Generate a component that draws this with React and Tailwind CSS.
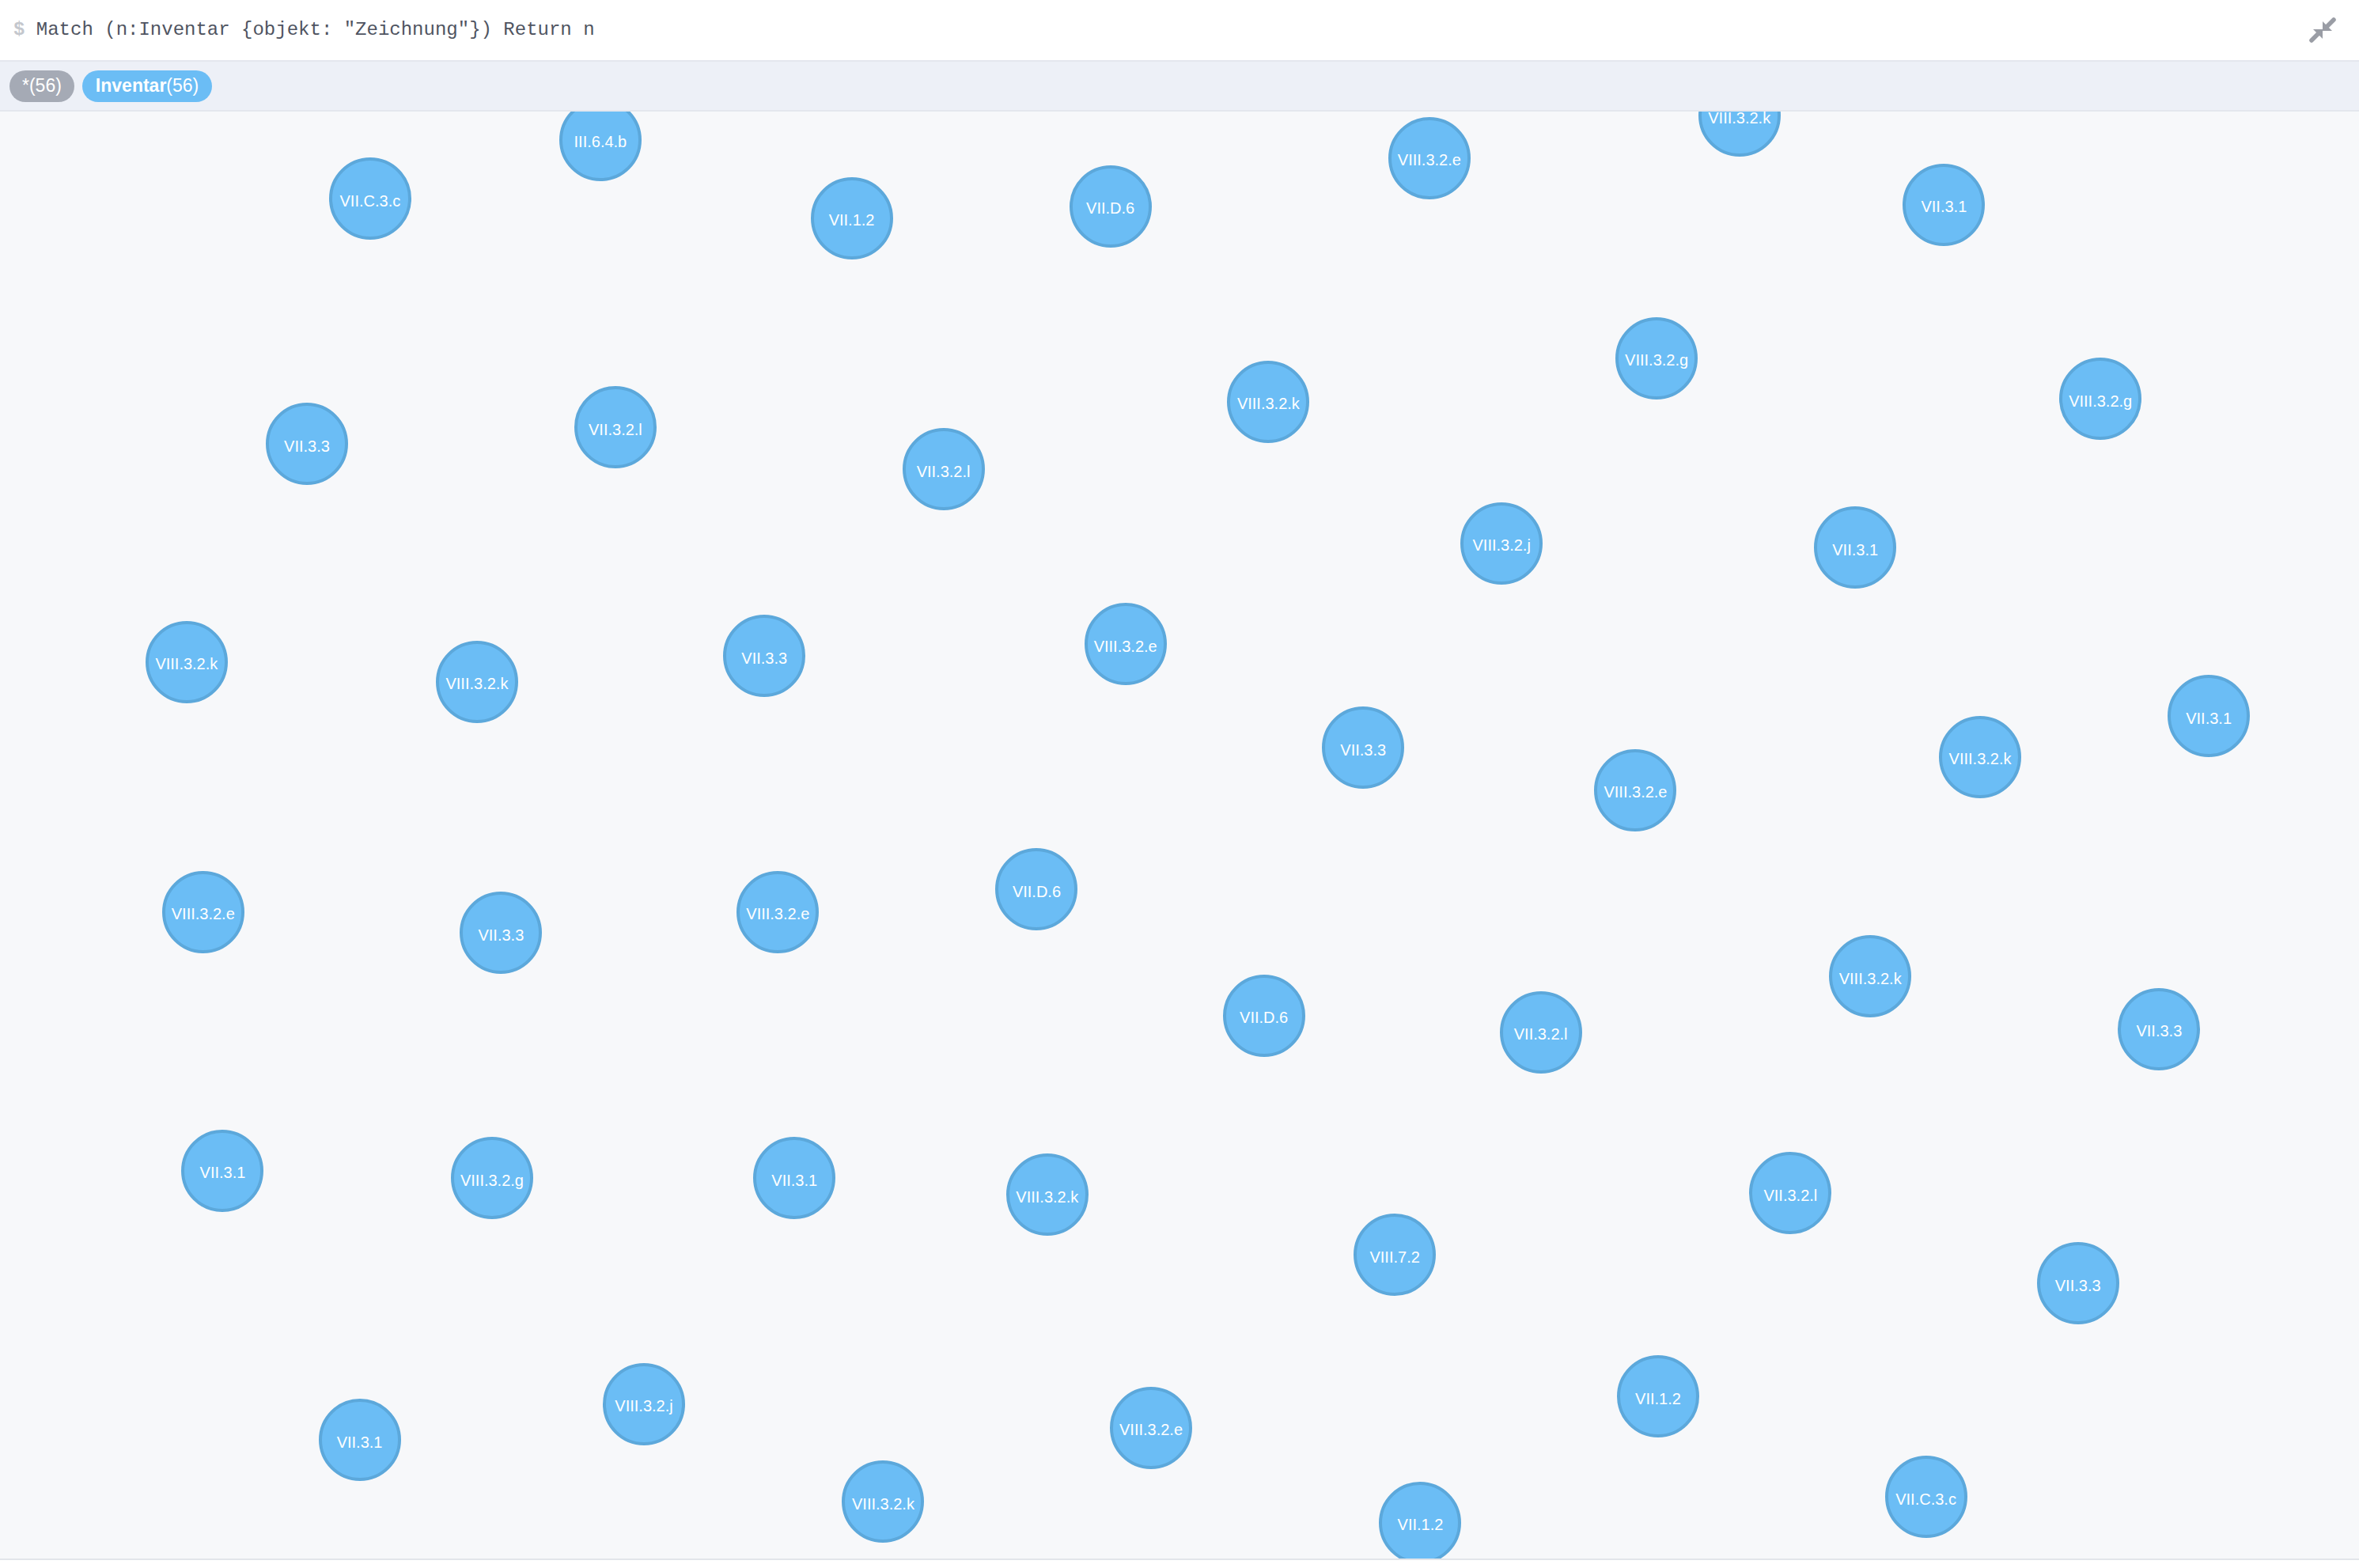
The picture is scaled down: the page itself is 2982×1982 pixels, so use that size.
import React from 'react';

// node centres measured on the half-size capture, scaled up at render
const nodes = [
    ['III.6.4.b', 399, 93],
    ['VII.C.3.c', 246, 132],
    ['VII.1.2', 566, 145],
    ['VII.D.6', 738, 137],
    ['VIII.3.2.e', 950, 105],
    ['VIII.3.2.k', 1156, 77],
    ['VII.3.1', 1292, 136],
    ['VIII.3.2.g', 1101, 238],
    ['VIII.3.2.g', 1396, 265],
    ['VIII.3.2.k', 843, 267],
    ['VII.3.3', 204, 295],
    ['VII.3.2.l', 409, 284],
    ['VII.3.2.l', 627, 312],
    ['VIII.3.2.j', 998, 361],
    ['VII.3.1', 1233, 364],
    ['VIII.3.2.k', 124, 440],
    ['VIII.3.2.k', 317, 453],
    ['VII.3.3', 508, 436],
    ['VIII.3.2.e', 748, 428],
    ['VII.3.3', 906, 497],
    ['VIII.3.2.e', 1087, 525],
    ['VIII.3.2.k', 1316, 503],
    ['VII.3.1', 1468, 476],
    ['VIII.3.2.e', 135, 606],
    ['VII.3.3', 333, 620],
    ['VIII.3.2.e', 517, 606],
    ['VII.D.6', 689, 591],
    ['VII.D.6', 840, 675],
    ['VII.3.2.l', 1024, 686],
    ['VIII.3.2.k', 1243, 649],
    ['VII.3.3', 1435, 684],
    ['VII.3.1', 148, 778],
    ['VIII.3.2.g', 327, 783],
    ['VII.3.1', 528, 783],
    ['VIII.3.2.k', 696, 794],
    ['VIII.7.2', 927, 834],
    ['VII.3.2.l', 1190, 793],
    ['VII.3.3', 1381, 853],
    ['VII.3.1', 239, 957],
    ['VIII.3.2.j', 428, 933],
    ['VIII.3.2.e', 765, 949],
    ['VIII.3.2.k', 587, 998],
    ['VII.1.2', 944, 1012],
    ['VII.1.2', 1102, 928],
    ['VII.C.3.c', 1280, 995],
];

const SCALE = 1.902;
const CANVAS_TOP = 141;
const R = 52;

const CollapseIcon = () => (
    <svg width="34" height="34" viewBox="0 0 34 34" fill="#9a9da5">
        <path d="M31 4 L22 13" stroke="#9a9da5" strokeWidth="5.5" strokeLinecap="round" />
        <polygon points="17,6 17,18 29,18" />
        <path d="M3 30 L12 21" stroke="#9a9da5" strokeWidth="5.5" strokeLinecap="round" />
        <polygon points="17,16 5,16 17,28" />
    </svg>
);

const App = () => {
    return (
        <div className="flex h-[1982px] w-full flex-col bg-white font-['Liberation_Sans',Arial,sans-serif]">
            <div className="flex h-[76px] shrink-0 items-center justify-between bg-white pl-[17px] pr-[29px]">
                <p className="whitespace-pre font-['Liberation_Mono',monospace] text-[24px] text-[#4f5461]">
                    <span className="font-bold text-[#c4c7cd]">$</span> Match (n:Inventar {'{'}objekt: "Zeichnung"{'}'}) Return n
                </p>
                <CollapseIcon />
            </div>

            <div className="flex h-[65px] shrink-0 items-center gap-[10px] border-y-2 border-[#e4e7ee] bg-[#edf0f7] pl-[12px]">
                <span className="flex h-[40px] items-center rounded-full bg-[#a5aab5] px-[16px] text-[23px] text-white">
                    *(56)
                </span>
                <span className="flex h-[40px] items-center rounded-full bg-[#6bbdf5] px-[17px] text-[23px] text-white">
                    <b>Inventar</b>(56)
                </span>
            </div>

            <div className="relative flex-1 overflow-hidden bg-[#f7f8fa]">
                {nodes.map(([label, x, y], i) => (
                    <div
                        key={i}
                        className="absolute flex h-[104px] w-[104px] items-center justify-center rounded-full border-4 border-[#5ca8db] bg-[#6bbdf5] pt-[5px] text-[20px] text-white"
                        style={{ left: x * SCALE - R, top: y * SCALE - CANVAS_TOP - R }}
                    >
                        {label}
                    </div>
                ))}
            </div>

            <div className="h-[12px] shrink-0 border-t-2 border-[#e2e5ea] bg-white" />
        </div>
    );
};

export default App;
